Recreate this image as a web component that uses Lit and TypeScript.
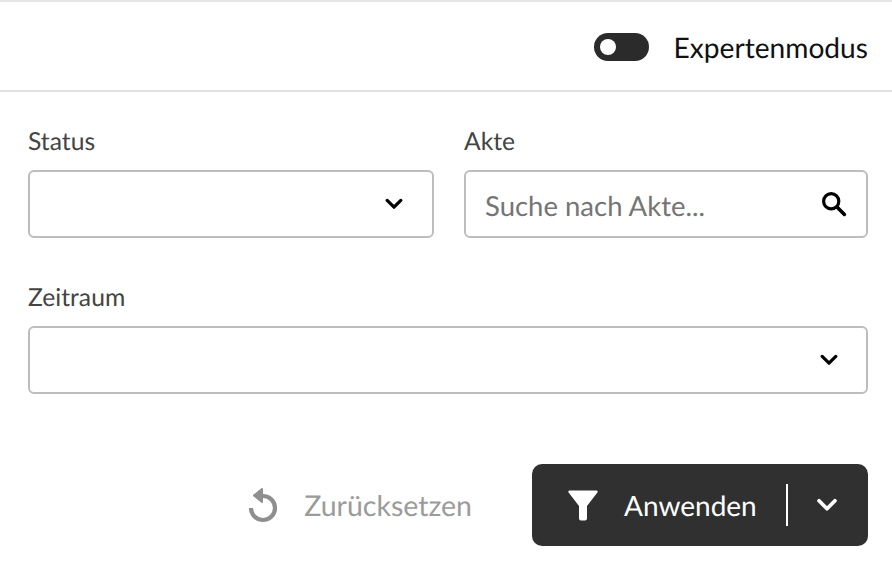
import { LitElement, html, css } from "lit";
import { customElement } from "lit/decorators.js";

const chevron = html`<svg class="chev" viewBox="0 0 18 12" width="18" height="12"><path d="M2.200 2.400 9 9.200l6.800-6.800" fill="none" stroke="currentColor" stroke-width="3.200" stroke-linecap="round" stroke-linejoin="round"/></svg>`;

@customElement("app-root")
export class AppRoot extends LitElement {
  static styles = css`
    :host { display: block; width: 892px; height: 566px; background: #fff; font-family: Lato, sans-serif; color: #3b3b3b; overflow: hidden; text-rendering: geometricPrecision; }
    .top { height: 88px; border-top: 2px solid #e6e6e6; border-bottom: 2px solid #e2e2e2; display: flex; align-items: center; justify-content: flex-end; padding: 0 24px; }
    .top-inner { display: flex; align-items: center; gap: 25px; margin-top: 2px; }
    .toggle { width: 55px; height: 28px; border-radius: 14px; background: #2b2b2b; position: relative; }
    .knob { position: absolute; left: 6px; top: 6px; width: 16px; height: 16px; border-radius: 50%; background: #fff; }
    .mode { font-size: 28.150px; line-height: 34px; color: #111; }
    .form { padding: 33px 24px 0 28px; display: grid; grid-template-columns: 406px 404px; column-gap: 30px; row-gap: 43px; }
    .field { display: flex; flex-direction: column; gap: 11px; }
    .wide { grid-column: 1 / 3; }
    label { font-size: 24.700px; line-height: 34px; display: block; color: #444; }
    .box { height: 68px; box-sizing: border-box; border: 2px solid #bdbdbd; border-radius: 6px; display: flex; align-items: center; justify-content: flex-end; padding: 0 29px 0 19px; color: #000; }
    .wide .box { padding-right: 28px; }
    .box.search { justify-content: space-between; padding-right: 19px; }
    .ph { font-size: 27.500px; color: #757575; padding-top: 2px; }
    .actions { display: flex; justify-content: flex-end; align-items: center; padding: 70px 24px 0 0; }
    .reset { display: flex; align-items: center; gap: 26px; color: #9b9b9b; font-size: 28.500px; margin-right: 60px; }
    .reset span { padding-top: 2px; }
    .reset svg { color: #8f8f8f; }
    .apply { width: 336px; height: 82px; box-sizing: border-box; background: #303030; color: #fff; border-radius: 10px; display: flex; align-items: center; padding-left: 36px; font-size: 28px; }
    .apply .label { margin-left: 26px; }
    .div { width: 2px; height: 42px; background: #fff; margin-left: 29px; }
    .apply .chev { margin-left: 28px; width: 22px; height: 14px; }
  `;
  render() {
    return html`
      <div class="top"><div class="top-inner">
        <div class="toggle"><div class="knob"></div></div>
        <span class="mode">Expertenmodus</span>
      </div></div>
      <div class="form">
        <div class="field"><label>Status</label><div class="box">${chevron}</div></div>
        <div class="field"><label>Akte</label><div class="box search"><span class="ph">Suche nach Akte...</span>
          <svg viewBox="0 0 26 26" width="26" height="26"><circle cx="10.200" cy="10.200" r="7.600" fill="none" stroke="currentColor" stroke-width="3.200"/><path d="M16 16l7.400 7.400" stroke="currentColor" stroke-width="3.600" stroke-linecap="round"/></svg>
        </div></div>
        <div class="field wide"><label>Zeitraum</label><div class="box">${chevron}</div></div>
      </div>
      <div class="actions">
        <div class="reset">
          <svg viewBox="0 0 30 36" width="30" height="36"><path d="M13 9h2a12 12 0 1 1-12 12" fill="none" stroke="currentColor" stroke-width="4.200"/><path d="M14 2v13L6 8.500z" fill="currentColor" stroke="currentColor" stroke-width="2" stroke-linejoin="round"/></svg>
          <span>Zurücksetzen</span>
        </div>
        <div class="apply">
          <svg viewBox="0 0 30 31" width="30" height="31"><path d="M1.500.5h27a1.200 1.200 0 0 1 .9 2L19 16v12.500a2 2 0 0 1-2 2h-4a2 2 0 0 1-2-2V16L.6 2.500a1.200 1.200 0 0 1 .9-2z" fill="currentColor"/></svg>
          <span class="label">Anwenden</span>
          <div class="div"></div>
          ${chevron}
        </div>
      </div>
    `;
  }
}
